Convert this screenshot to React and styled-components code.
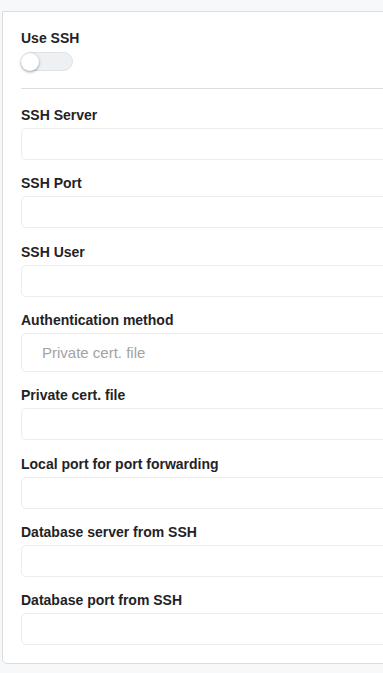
import React from "react";
import styled, { createGlobalStyle } from "styled-components";

const Global = createGlobalStyle`
  html, body { margin: 0; padding: 0; overflow: hidden; background: #f7f8fa; }
  body { font-family: "Liberation Sans", Arial, sans-serif; }
  * { box-sizing: border-box; }
`;

const Page = styled.div`
  padding: 11px 0 0 2px;
  width: 460px;
`;

const Card = styled.div`
  background: #fff;
  border: 1px solid #dcdcdc;
  border-radius: 0 0 5px 5px;
  padding: 18px 18px 18px 18px;
  width: 440px;
`;

const Label = styled.div`
  font-size: 14px;
  line-height: 16px;
  font-weight: 700;
  color: #1f2326;
  margin-bottom: ${(p) => p.$mb ?? 5}px;
`;

const Group = styled.div`
  margin-bottom: ${(p) => (p.$last ? 0 : 15.33)}px;
`;

const Track = styled.div`
  width: 52px;
  height: 19px;
  border-radius: 10px;
  background: #eef1f4;
  border: 1px solid #dde2e7;
  display: flex;
  align-items: center;
`;

const Knob = styled.div`
  width: 18px;
  height: 18px;
  margin-left: -1px;
  border-radius: 50%;
  background: #fff;
  box-shadow: 0 1px 3px rgba(0, 0, 0, 0.4);
`;

const Divider = styled.hr`
  border: 0;
  border-top: 1px solid #dedede;
  margin: 17px 0 18px 0;
`;

const Input = styled.input`
  display: block;
  width: 100%;
  height: 32px;
  border: 1px solid #ececec;
  border-radius: 5px;
  background: #fff;
  font-family: inherit;
  font-size: 15px;
  padding: 0 20px;
  outline: none;
`;

const Select = styled.div`
  height: 39px;
  border: 1px solid #ececec;
  border-radius: 5px;
  display: flex;
  align-items: center;
  padding: 0 20px;
  font-size: 15px;
  color: #a3a3a3;
`;

const fields = [
  "SSH Server",
  "SSH Port",
  "SSH User",
  "Authentication method",
  "Private cert. file",
  "Local port for port forwarding",
  "Database server from SSH",
  "Database port from SSH",
];

export default function App() {
  return (
    <>
      <Global />
      <Page>
        <Card>
          <Label $mb={6}>Use SSH</Label>
          <Track>
            <Knob />
          </Track>
          <Divider />
          {fields.map((f, i) => (
            <Group key={f} $last={i === fields.length - 1}>
              <Label>{f}</Label>
              {f === "Authentication method" ? (
                <Select>Private cert. file</Select>
              ) : (
                <Input />
              )}
            </Group>
          ))}
        </Card>
      </Page>
    </>
  );
}
